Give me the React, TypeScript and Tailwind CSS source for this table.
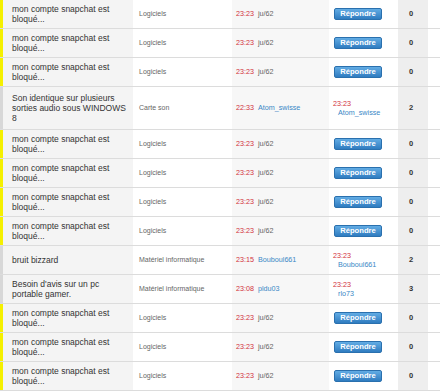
import React from 'react';

type Row = {
  title: string;
  cat: string;
  time: string;
  author: string;
  authorLink?: boolean;
  last?: { time: string; user: string };
  count: number;
  fresh?: boolean;
  tall?: boolean;
};

const snap: Row = {
  title: 'mon compte snapchat est bloqué...',
  cat: 'Logiciels',
  time: '23:23',
  author: 'ju/62',
  count: 0,
  fresh: true,
};

const rows: Row[] = [
  snap,
  snap,
  snap,
  {
    title: 'Son identique sur plusieurs sorties audio sous WINDOWS 8',
    cat: 'Carte son',
    time: '22:33',
    author: 'Atom_swisse',
    authorLink: true,
    last: { time: '23:23', user: 'Atom_swisse' },
    count: 2,
    tall: true,
  },
  snap,
  snap,
  snap,
  snap,
  {
    title: 'bruit bizzard',
    cat: 'Matériel informatique',
    time: '23:15',
    author: 'Bouboul661',
    authorLink: true,
    last: { time: '23:23', user: 'Bouboul661' },
    count: 2,
  },
  {
    title: "Besoin d'avis sur un pc portable gamer.",
    cat: 'Matériel informatique',
    time: '23:08',
    author: 'pldu03',
    authorLink: true,
    last: { time: '23:23', user: 'rlo73' },
    count: 3,
  },
  snap,
  snap,
  snap,
];

const ForumRow: React.FC<{ row: Row }> = ({ row }) => (
  <div
    className={`flex border-b border-[#dcdcdc] ${row.tall ? 'h-[43px]' : 'h-[29px]'}`}
  >
    <div className={`w-[3px] shrink-0 ${row.fresh ? 'bg-[#f5f000]' : 'bg-[#d8d8d8]'}`} />
    <div className="w-[130px] shrink-0 bg-[#f4f4f4] pl-[9px] pr-[3px] flex items-center text-[8.5px] leading-[10px] text-[#333]">
      {row.title}
    </div>
    <div className="w-[99px] shrink-0 bg-white pl-[6px] flex items-center text-[7px] text-[#666]">
      {row.cat}
    </div>
    <div className="w-[97px] shrink-0 bg-[#f7f7f7] pl-[4px] flex items-center text-[7.2px]">
      <span className="text-[#d2323c]">{row.time}</span>
      <span className={`ml-[4px] ${row.authorLink ? 'text-[#3a88c6]' : 'text-[#666]'}`}>{row.author}</span>
    </div>
    <div className="w-[69px] shrink-0 bg-white pl-[5px] flex items-center">
      {row.last ? (
        <div className="-ml-[1px] flex flex-col text-[7.2px] leading-[9.5px]">
          <span className="text-[#d2323c]">{row.last.time}</span>
          <span className="pl-[5px] text-[#3a88c6]">{row.last.user}</span>
        </div>
      ) : (
        <span className="w-[48px] h-[12px] rounded-[2px] border border-[#2a70ae] bg-gradient-to-b from-[#62ace4] to-[#2f7cc0] flex items-center justify-center text-white font-bold text-[7.6px] leading-none">
          Répondre
        </span>
      )}
    </div>
    <div className="w-[30px] shrink-0 bg-[#eeeeee] flex items-center pl-[11px] text-[7.5px] font-bold text-[#333]">
      {row.count}
    </div>
    <div className="flex-1 bg-white" />
  </div>
);

export default function App() {
  return (
    <div className="w-[440px] h-[391px] overflow-hidden bg-white font-['Liberation_Sans',Arial,sans-serif]">
      {rows.map((row, i) => (
        <ForumRow key={i} row={row} />
      ))}
    </div>
  );
}
